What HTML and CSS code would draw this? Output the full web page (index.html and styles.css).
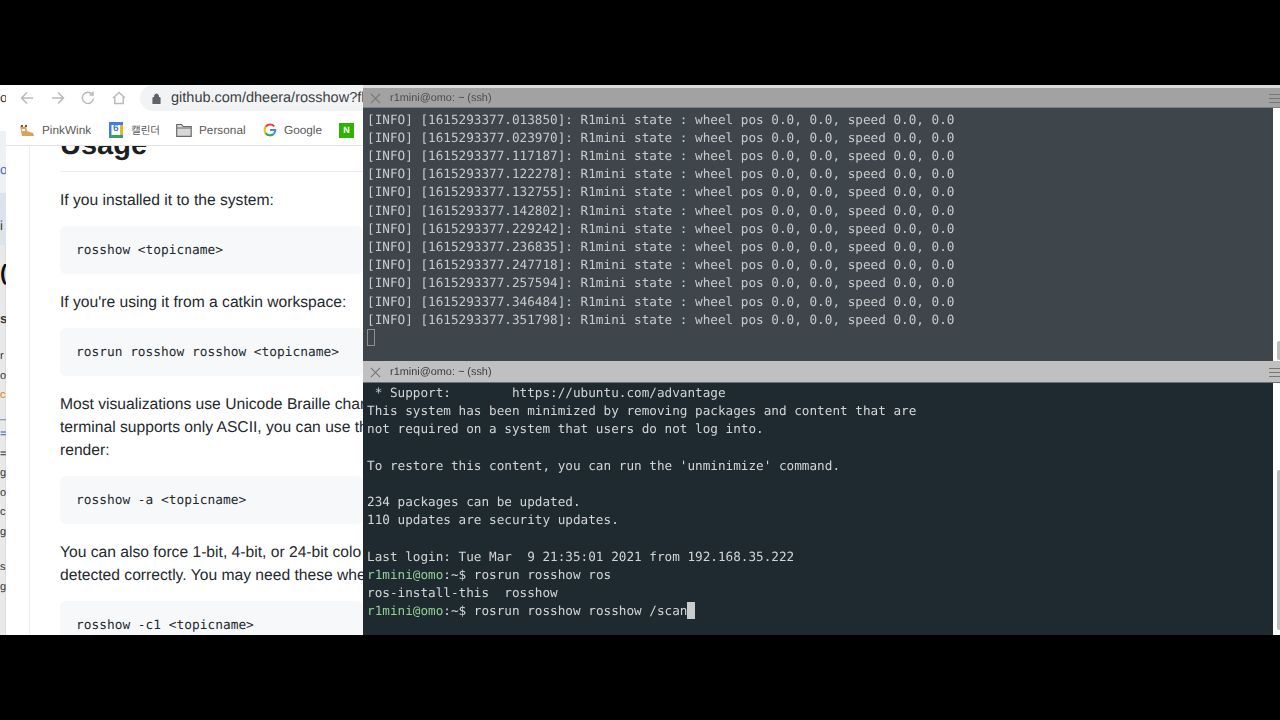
FILE: index.html
```html
<!DOCTYPE html>
<html lang="en">
<head>
<meta charset="utf-8">
<title>rosshow</title>
<link rel="stylesheet" href="styles.css">
</head>
<body>
<div class="screen">
  <div class="sliver">
    <div class="sliver-top"><span class="frag">o</span></div>
    <div class="sliver-blue"><span class="frag link">o</span></div>
    <div class="sliver-mid"><span class="frag">i</span></div>
    <div class="sliver-rest">
      <span class="frag big">(</span>
      <span class="frag dots">s.</span>
      <span class="frag tiny r1">r</span>
      <span class="frag tiny">ov</span>
      <span class="frag tiny orange">c</span>
      <span class="frag tiny link">_</span>
      <span class="frag tiny link">=</span>
      <span class="frag tiny">=,</span>
      <span class="frag tiny">gl</span>
      <span class="frag tiny">o</span>
      <span class="frag tiny">c:</span>
      <span class="frag tiny">g</span>
      <span class="frag tiny gap">s</span>
      <span class="frag tiny">g</span>
    </div>
  </div>
  <div class="browser">
    <div class="toolbar">
      <svg class="nav" viewBox="0 0 16 16"><path d="M14 8H2.5M8 2.5 2.5 8 8 13.5"/></svg>
      <svg class="nav" viewBox="0 0 16 16"><path d="M2 8h11.5M8 2.5 13.500 8 8 13.500"/></svg>
      <svg class="nav" viewBox="0 0 16 16"><path d="M13.500 8.500A5.600 5.600 0 1 1 12 4M13 1.500V5H9.500"/></svg>
      <svg class="nav" viewBox="0 0 16 16"><path d="M2 8 8 2.500 14 8M3.800 7v6.500h8.400V7"/></svg>
      <div class="omnibox">
        <svg class="lock" viewBox="0 0 10 12"><path d="M1 5h8v7H1zM2.800 5V3.200a2.200 2.200 0 0 1 4.400 0V5" /></svg>
        <span class="url">github.com/dheera/rosshow?fl</span>
      </div>
    </div>
    <div class="bookmarks">
      <span class="bm bm-fox">
        <svg class="bm-icon" viewBox="0 0 16 16"><path fill="#d9a35b" d="M1 4l3 1 3-1 1 5 6 2 1 3H3L2 9z"/><path fill="#fff" d="M3 7h3v2H3z"/><path fill="#7a5a30" d="M2 3h2v2H2zM6 3h2v2H6z"/></svg>
        PinkWink
      </span>
      <span class="bm bm-cal">
        <svg class="bm-icon" viewBox="0 0 16 16"><rect x="1" width="14" height="16" fill="#3f7fe0"/><rect x="3.500" y="3" width="9" height="10" fill="#fff"/><path fill="#f4b400" d="M12.500 3H15v10h-2.500z"/><path fill="#34a853" d="M1 13h11.500v3H1z"/></svg>
        <span class="six">6</span>
        <span class="cal">캘린더</span>
      </span>
      <span class="bm bm-folder">
        <svg class="bm-icon folder" viewBox="0 0 16 14"><path d="M.7 1.500h5l1.500 2h8v9.800H.7zM.7 5h14.500"/></svg>
        Personal
      </span>
      <span class="bm bm-google">
        <svg class="bm-icon g-icon" viewBox="0 0 16 16"><path fill="none" stroke="#ea4335" stroke-width="2.400" d="M12.800 3.800A6.200 6.200 0 0 0 3 4.500"/><path fill="none" stroke="#fbbc05" stroke-width="2.400" d="M3 4.500a6.200 6.200 0 0 0 0 7"/><path fill="none" stroke="#34a853" stroke-width="2.400" d="M3 11.500a6.200 6.200 0 0 0 9.500.7"/><path fill="none" stroke="#4285f4" stroke-width="2.400" d="M8 8h6a6.200 6.200 0 0 1-1.500 4.200"/></svg>
        Google
      </span>
      <span class="naver">N</span>
    </div>
    <div class="page">
      <article class="readme">
        <h2 class="title">Usage</h2>
        <p class="lead">If you installed it to the system:</p>
        <pre class="code">rosshow &lt;topicname&gt;</pre>
        <p>If you're using it from a catkin workspace:</p>
        <pre class="code">rosrun rosshow rosshow &lt;topicname&gt;</pre>
        <p>Most visualizations use Unicode Braille char<br>terminal supports only ASCII, you can use th<br>render:</p>
        <pre class="code">rosshow -a &lt;topicname&gt;</pre>
        <p>You can also force 1-bit, 4-bit, or 24-bit colo<br>detected correctly. You may need these whe</p>
        <pre class="code">rosshow -c1 &lt;topicname&gt;</pre>
      </article>
    </div>
  </div>
  <div class="terminals">
    <section class="pane pane-top">
      <header class="titlebar">
        <svg class="close" viewBox="0 0 12 12"><path d="M1 1l10 10M11 1 1 11"/></svg>
        <span class="win-title">r1mini@omo: ~ (ssh)</span>
        <span class="burger"></span>
      </header>
      <div class="pane-body">
<pre class="term">[INFO] [1615293377.013850]: R1mini state : wheel pos 0.0, 0.0, speed 0.0, 0.0
[INFO] [1615293377.023970]: R1mini state : wheel pos 0.0, 0.0, speed 0.0, 0.0
[INFO] [1615293377.117187]: R1mini state : wheel pos 0.0, 0.0, speed 0.0, 0.0
[INFO] [1615293377.122278]: R1mini state : wheel pos 0.0, 0.0, speed 0.0, 0.0
[INFO] [1615293377.132755]: R1mini state : wheel pos 0.0, 0.0, speed 0.0, 0.0
[INFO] [1615293377.142802]: R1mini state : wheel pos 0.0, 0.0, speed 0.0, 0.0
[INFO] [1615293377.229242]: R1mini state : wheel pos 0.0, 0.0, speed 0.0, 0.0
[INFO] [1615293377.236835]: R1mini state : wheel pos 0.0, 0.0, speed 0.0, 0.0
[INFO] [1615293377.247718]: R1mini state : wheel pos 0.0, 0.0, speed 0.0, 0.0
[INFO] [1615293377.257594]: R1mini state : wheel pos 0.0, 0.0, speed 0.0, 0.0
[INFO] [1615293377.346484]: R1mini state : wheel pos 0.0, 0.0, speed 0.0, 0.0
[INFO] [1615293377.351798]: R1mini state : wheel pos 0.0, 0.0, speed 0.0, 0.0
<span class="cursor-hollow"></span></pre>
        <div class="scroll"><span class="thumb thumb-top"></span></div>
      </div>
    </section>
    <section class="pane pane-bottom">
      <header class="titlebar">
        <svg class="close" viewBox="0 0 12 12"><path d="M1 1l10 10M11 1 1 11"/></svg>
        <span class="win-title">r1mini@omo: ~ (ssh)</span>
        <span class="burger"></span>
      </header>
      <div class="pane-body">
<pre class="term"> * Support:        https://ubuntu.com/advantage
This system has been minimized by removing packages and content that are
not required on a system that users do not log into.

To restore this content, you can run the 'unminimize' command.

234 packages can be updated.
110 updates are security updates.

Last login: Tue Mar  9 21:35:01 2021 from 192.168.35.222
<span class="prompt">r1mini@omo</span>:~$ rosrun rosshow ros
ros-install-this  rosshow
<span class="prompt">r1mini@omo</span>:~$ rosrun rosshow rosshow /scan<span class="cursor"></span></pre>
        <div class="scroll"><span class="thumb thumb-bottom"></span></div>
      </div>
    </section>
  </div>
</div>
</body>
</html>
```
FILE: styles.css
```css
* { box-sizing: border-box; }
html, body { margin: 0; height: 720px; background: #000; overflow: hidden; }
body { padding: 85px 0; text-rendering: geometricPrecision; }
.screen { display: flex; height: 550px; overflow: hidden; filter: blur(0.4px); }

.sliver { width: 6px; flex: none; display: flex; flex-direction: column; overflow: hidden; background: #e9e9e9; font: 13px/1 "Liberation Sans", sans-serif; color: #333; box-shadow: inset -1px 0 0 #dcdcdc; }
.sliver-top { height: 46px; padding-top: 6px; background: #fff; }
.sliver-blue { height: 62px; padding-top: 32px; background: #eef1f6; }
.sliver-mid { height: 52px; padding-top: 26px; background: #dde3ec; }
.sliver-rest { flex: 1; display: flex; flex-direction: column; gap: 7.500px; }
.frag { display: block; height: 12px; white-space: nowrap; }
.big { font-size: 22px; font-weight: 700; color: #111; height: 20px; margin-top: 17px; }
.dots { font-weight: 700; margin-top: 22px; }
.tiny { font-size: 11px; }
.r1 { margin-top: 20px; }
.gap { margin-top: 16px; }
.link { color: #3b69b5; }
.orange { color: #d9822b; }

.browser { width: 357px; flex: none; display: flex; flex-direction: column; background: #fff; overflow: hidden; font-family: "Liberation Sans", sans-serif; }
.toolbar { height: 30px; flex: none; display: flex; align-items: center; padding: 0 0 4px 13px; gap: 14.500px; background: #fff; }
.nav { width: 16px; height: 16px; flex: none; fill: none; stroke: #b8babc; stroke-width: 1.500; }
.omnibox { flex: 1; min-width: 0; height: 26px; margin-left: -1px; display: flex; align-items: center; padding-left: 12px; gap: 10px; background: #f1f3f4; border-radius: 13px 0 0 13px; overflow: hidden; }
.lock { width: 9px; height: 11px; flex: none; fill: #5f6368; stroke: #5f6368; stroke-width: 1; }
.url { font-size: 14.500px; color: #3c4043; white-space: nowrap; }

.bookmarks { height: 31px; flex: none; display: flex; align-items: center; padding-left: 13px; border-bottom: 1px solid #e4e4e4; font-size: 11.800px; color: #5a5a5a; white-space: nowrap; }
.bm { display: inline-flex; align-items: center; gap: 7px; position: relative; }
.bm-fox { width: 89px; }
.bm-cal { width: 68px; }
.bm-folder { width: 87px; }
.bm-google { width: 76px; }
.bm-icon { width: 16px; height: 16px; flex: none; }
.g-icon { width: 14px; height: 14px; }
.folder { height: 14px; fill: #d8d8d8; stroke: #6b6b6b; stroke-width: 1.200; }
.six { position: absolute; left: 5px; top: 1px; font-size: 10px; font-weight: 700; color: #3f7fe0; }
.cal { font-family: "Noto Sans CJK KR", sans-serif; font-size: 10.500px; }
.naver { width: 15px; height: 15px; flex: none; background: #2db400; color: #fff; font: 700 9px/15px "Liberation Sans", sans-serif; text-align: center; }

.page { flex: 1; min-height: 0; overflow: hidden; padding-left: 23px; }
.readme { height: 100%; padding-left: 30px; border-left: 1px solid #eeeeee; color: #24292e; font-size: 15.650px; line-height: 23px; white-space: nowrap; overflow: hidden; }
.title { margin: -19px 0 0; height: 45px; border-bottom: 1px solid #eaecef; font-size: 29px; line-height: 36px; font-weight: 700; color: #1b1f23; }
.readme p { margin: 0; padding-top: 17px; }
.readme .lead { padding-top: 17px; }
.code { margin: 14px 0 0; height: 48px; padding: 0 16px; border-radius: 6px; background: #f6f8fa; font: 12.850px/50px "DejaVu Sans Mono", monospace; color: #24292e; overflow: hidden; }

.terminals { flex: 1; min-width: 0; display: flex; flex-direction: column; }
.pane { display: flex; flex-direction: column; overflow: hidden; }
.pane-top { height: 276px; }
.pane-bottom { flex: 1; min-height: 0; }
.titlebar { height: 23px; flex: none; display: flex; align-items: center; padding-left: 7px; gap: 9px; font: 10.900px "Liberation Sans", sans-serif; }
.pane-top .titlebar { padding-top: 1px; background: #a2a2a2; border-top: 3px solid #dcdcdc; border-bottom: 1px solid #7d8184; color: #4d4d4d; }
.pane-bottom .titlebar { height: 22px; padding-top: 1px; background: #c0c0c0; color: #3c3c3c; border-bottom: 1px solid #6e7276; }
.close { width: 11px; height: 11px; flex: none; fill: none; stroke: #777; stroke-width: 1.300; }
.win-title { flex: 1; }
.burger { width: 11px; height: 9px; flex: none; border-top: 1px solid #777; border-bottom: 1px solid #777; background: linear-gradient(#777, #777) center / 100% 1px no-repeat; }
.pane-body { flex: 1; min-height: 0; display: flex; }
.pane-top .pane-body { background: #3e464c; }
.pane-bottom .pane-body { background: #1f2a30; }
.term { flex: 1; min-width: 0; margin: 0; padding: 2px 0 0 4px; overflow: hidden; font: 12.680px/18.200px "DejaVu Sans Mono", monospace; color: #d2d5d6; }
.pane-bottom .term { padding-top: 1px; }
.pane-top .term { color: #c6cacb; padding-top: 2.500px; }
.prompt { color: #8fcf8f; }
.cursor { display: inline-block; width: 8px; height: 17px; vertical-align: -4px; background: #c9cccd; }
.cursor-hollow { display: inline-block; width: 8px; height: 17px; vertical-align: -4px; border: 1px solid #8b9094; }
.scroll { width: 7px; flex: none; display: flex; flex-direction: column; justify-content: flex-end; align-items: flex-end; background: #fff; }
.thumb { display: block; width: 3px; background: #bcbcbc; border-radius: 2px 0 0 2px; }
.thumb-top { height: 19px; margin-bottom: 1px; }
.thumb-bottom { height: 160px; margin-bottom: 5px; }
```
